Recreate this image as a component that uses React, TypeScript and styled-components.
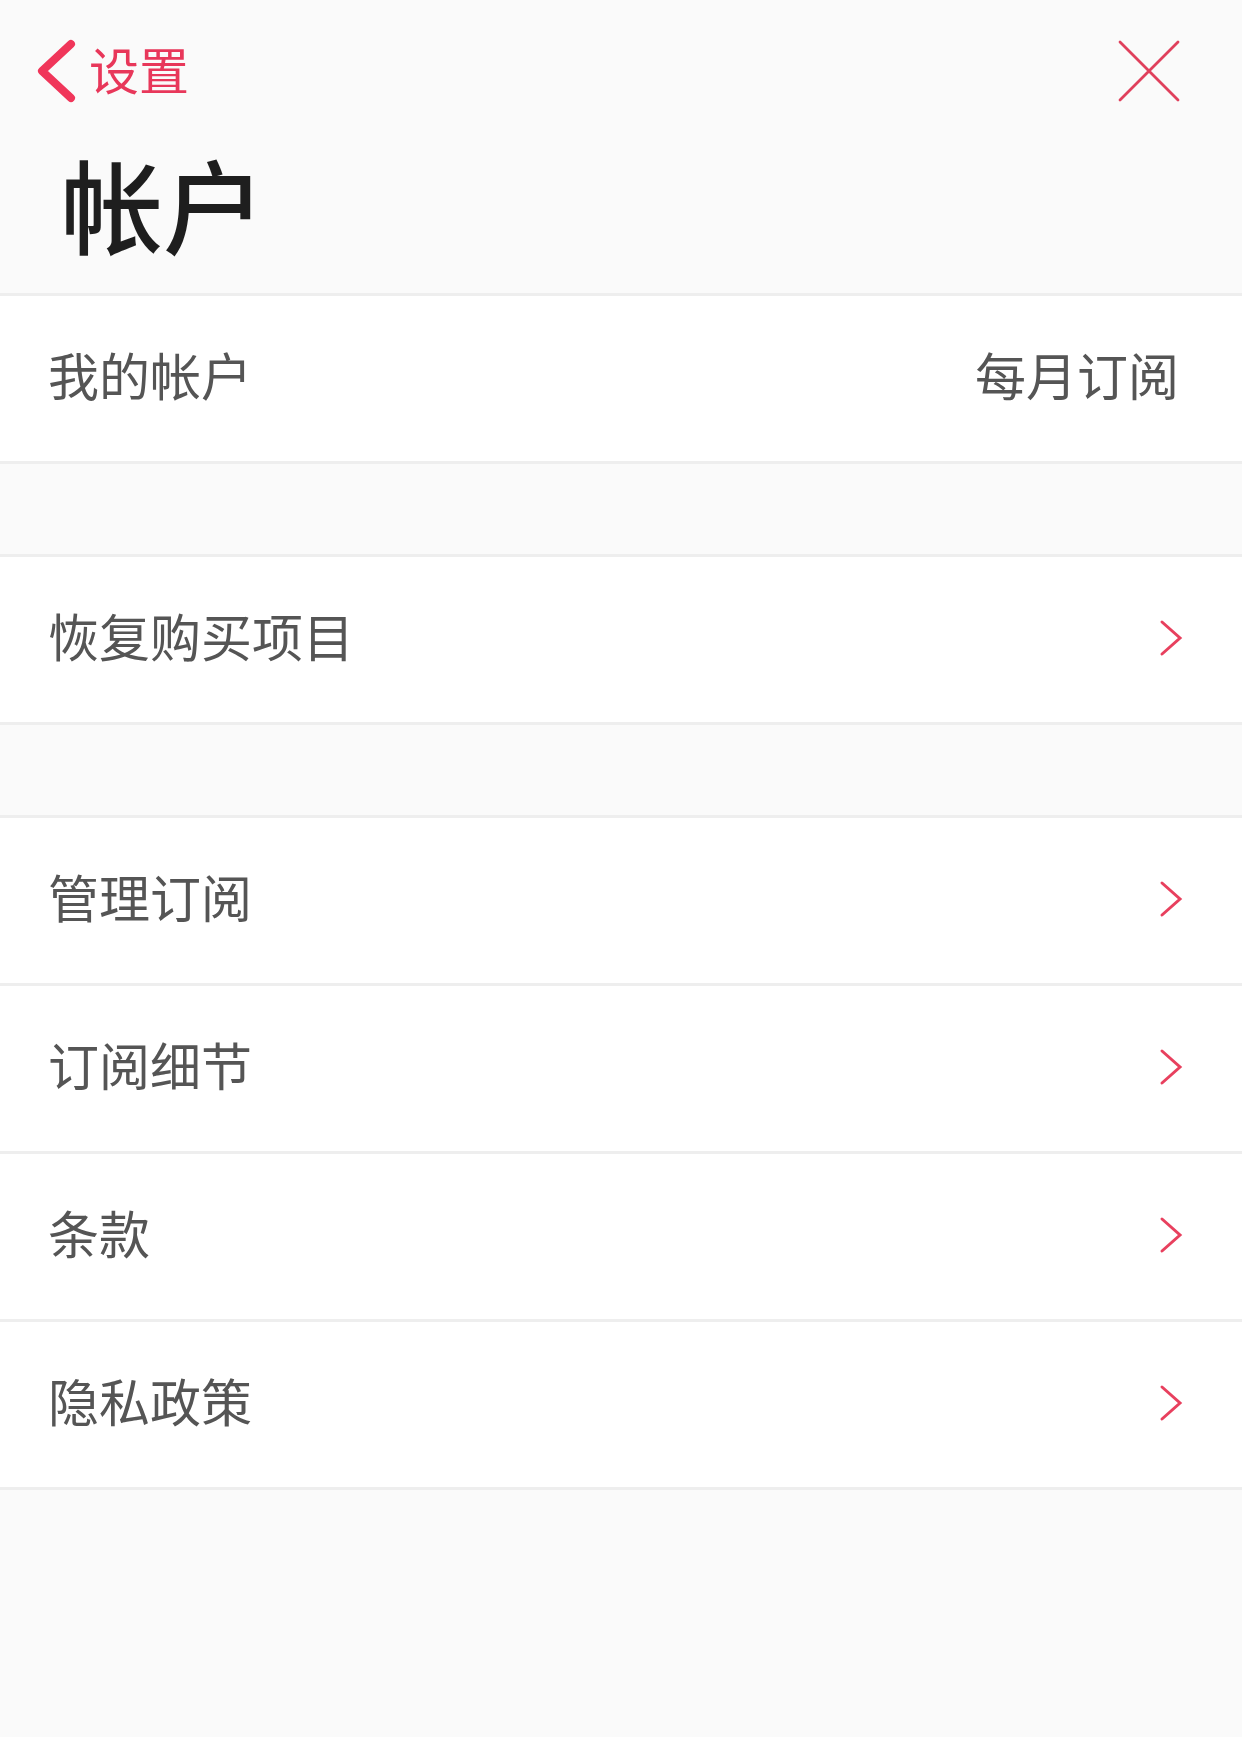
import React from "react";
import styled, { createGlobalStyle } from "styled-components";

const GlobalStyle = createGlobalStyle`
  html, body {
    margin: 0;
    padding: 0;
    background: #fafafa;
  }
  body {
    font-family: "Noto Sans CJK SC", "Noto Sans", sans-serif;
  }
  * { box-sizing: border-box; }
`;

const Page = styled.div`
  width: 1242px;
  min-height: 1737px;
  background: #fafafa;
`;

const Header = styled.header`
  display: flex;
  flex-direction: column;
  padding-bottom: 30px;
`;

const NavBar = styled.div`
  height: 142px;
  display: flex;
  align-items: center;
  justify-content: space-between;
  padding: 0 61px 0 34px;
`;

const BackButton = styled.button`
  display: flex;
  align-items: center;
  gap: 9px;
  border: none;
  background: none;
  padding: 0;
  cursor: pointer;
  color: #e8375a;
  font-family: "Noto Sans CJK SC", sans-serif;
  font-size: 50px;
  line-height: 1;
`;

const BackLabel = styled.span`
  margin-bottom: 6px;
`;

const CloseButton = styled.button`
  display: flex;
  border: none;
  background: none;
  padding: 0;
  cursor: pointer;
`;

const Title = styled.h1`
  margin: 0;
  padding-left: 61px;
  font-size: 102px;
  line-height: 121px;
  font-weight: 500;
  color: #1e1e1e;
`;

const Group = styled.section`
  display: flex;
  flex-direction: column;
  background: #ffffff;
  border-top: 3px solid #eeeeee;
  & + & {
    margin-top: 90px;
  }
`;

const Row = styled.div`
  height: 168px;
  display: flex;
  align-items: center;
  justify-content: space-between;
  padding: 0 58px 3px 48px;
  border-bottom: 3px solid #eeeeee;
  font-size: 51px;
  color: #555555;
`;

const Label = styled.span`
  line-height: 1;
  margin-bottom: 5px;
`;

const Value = styled.span`
  line-height: 1;
  margin: 0 5px 5px 0;
  color: #555555;
`;

const Chevron = () => (
  <svg width="26" height="40" viewBox="0 0 26 40">
    <path d="M4 4 L22 20 L4 36" fill="none" stroke="#e8405e" strokeWidth="3" strokeLinecap="round" strokeLinejoin="miter" />
  </svg>
);

const BackIcon = () => (
  <svg width="46" height="70" viewBox="0 0 46 70">
    <path d="M37 8 L8 35 L37 62" fill="none" stroke="#f0365a" strokeWidth="8" strokeLinecap="round" strokeLinejoin="round" />
  </svg>
);

const CloseIcon = () => (
  <svg width="64" height="64" viewBox="0 0 64 64">
    <path d="M3 3 L61 61 M61 3 L3 61" fill="none" stroke="#e0405c" strokeWidth="2.8" strokeLinecap="round" />
  </svg>
);

const groups: { label: string; value?: string }[][] = [
  [{ label: "我的帐户", value: "每月订阅" }],
  [{ label: "恢复购买项目" }],
  [
    { label: "管理订阅" },
    { label: "订阅细节" },
    { label: "条款" },
    { label: "隐私政策" },
  ],
];

export default function App() {
  return (
    <Page>
      <GlobalStyle />
      <Header>
        <NavBar>
          <BackButton>
            <BackIcon />
            <BackLabel>设置</BackLabel>
          </BackButton>
          <CloseButton>
            <CloseIcon />
          </CloseButton>
        </NavBar>
        <Title>帐户</Title>
      </Header>
      {groups.map((g, gi) => (
        <Group key={gi}>
          {g.map((item) => (
            <Row key={item.label}>
              <Label>{item.label}</Label>
              {item.value ? <Value>{item.value}</Value> : <Chevron />}
            </Row>
          ))}
        </Group>
      ))}
    </Page>
  );
}
